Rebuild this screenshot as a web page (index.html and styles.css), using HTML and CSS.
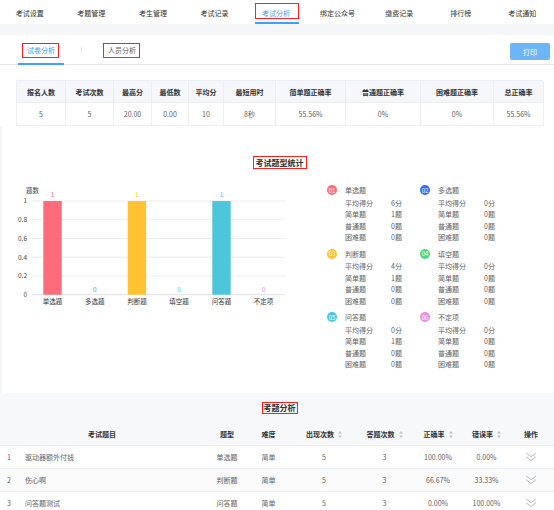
FILE: index.html
```html
<!DOCTYPE html>
<html lang="zh-CN">
<head>
<meta charset="utf-8">
<title>考试分析</title>
<link rel="stylesheet" href="styles.css">
</head>
<body>
<nav class="topnav">
  <div class="nav-item"><div class="nav-link"><span class="nav-label">考试设置</span></div></div>
  <div class="nav-item"><div class="nav-link"><span class="nav-label">考题管理</span></div></div>
  <div class="nav-item"><div class="nav-link"><span class="nav-label">考生管理</span></div></div>
  <div class="nav-item"><div class="nav-link"><span class="nav-label">考试记录</span></div></div>
  <div class="nav-item active"><div class="nav-link"><span class="nav-label">考试分析</span></div></div>
  <div class="nav-item"><div class="nav-link"><span class="nav-label">绑定公众号</span></div></div>
  <div class="nav-item"><div class="nav-link"><span class="nav-label">缴费记录</span></div></div>
  <div class="nav-item"><div class="nav-link"><span class="nav-label">排行榜</span></div></div>
  <div class="nav-item"><div class="nav-link"><span class="nav-label">考试通知</span></div></div>
</nav>
<div class="band"></div>

<div class="subtabs">
  <div class="subtab active"><span class="subtab-label">试卷分析</span></div>
  <div class="subtab-sep"></div>
  <div class="subtab"><span class="subtab-label">人员分析</span></div>
  <button class="print-btn">打印</button>
</div>

<div class="summary">
  <div class="summary-grid">
    <div class="sh">报名人数</div><div class="sh">考试次数</div><div class="sh">最高分</div><div class="sh">最低数</div><div class="sh">平均分</div><div class="sh">最短用时</div><div class="sh">简单题正确率</div><div class="sh">普通题正确率</div><div class="sh">困难题正确率</div><div class="sh">总正确率</div>
    <div class="sd">5</div><div class="sd">5</div><div class="sd">20.00</div><div class="sd">0.00</div><div class="sd">10</div><div class="sd">8秒</div><div class="sd">55.56%</div><div class="sd">0%</div><div class="sd">0%</div><div class="sd">55.56%</div>
  </div>
</div>

<section class="types">
  <div class="section-title"><span class="boxed-title">考试题型统计</span></div>
  <div class="types-body">
    <svg class="chart" width="300" height="135" viewBox="0 0 300 135">
      <text x="26" y="11.5" class="ax">题数</text>
      <g class="grid">
        <line x1="32" y1="20" x2="285" y2="20"/>
        <line x1="32" y1="38.7" x2="285" y2="38.7"/>
        <line x1="32" y1="57.5" x2="285" y2="57.5"/>
        <line x1="32" y1="76.2" x2="285" y2="76.2"/>
        <line x1="32" y1="95" x2="285" y2="95"/>
      </g>
      <line x1="32" y1="113.7" x2="285" y2="113.7" class="axis"/>
      <g class="ylab">
        <text x="27" y="22.3">1</text>
        <text x="27" y="41">0.8</text>
        <text x="27" y="59.8">0.6</text>
        <text x="27" y="78.5">0.4</text>
        <text x="27" y="97.3">0.2</text>
        <text x="27" y="116">0</text>
      </g>
      <rect x="43.3" y="20" width="18.4" height="93.7" fill="#ff6b78"/>
      <rect x="127.7" y="20" width="18.4" height="93.7" fill="#ffc233"/>
      <rect x="212.3" y="20" width="18.4" height="93.7" fill="#4dc6dc"/>
      <g class="vlab">
        <text x="52.5" y="15.5" fill="#ff6b78">1</text>
        <text x="94.7" y="110.5" fill="#5b8ff9">0</text>
        <text x="136.9" y="15.5" fill="#ffc233">1</text>
        <text x="179.1" y="110.5" fill="#5ad88f">0</text>
        <text x="221.5" y="15.5" fill="#4dc6dc">1</text>
        <text x="263.5" y="110.5" fill="#e58fe8">0</text>
      </g>
      <g class="xlab">
        <text x="52.5" y="123">单选题</text>
        <text x="94.7" y="123">多选题</text>
        <text x="136.9" y="123">判断题</text>
        <text x="179.1" y="123">填空题</text>
        <text x="221.5" y="123">问答题</text>
        <text x="263.5" y="123">不定项</text>
      </g>
    </svg>

    <div class="stats">
      <div class="stat-group">
        <div class="stat-head"><span class="badge c1">01</span><span>单选题</span></div>
        <div class="stat-row"><span>平均得分</span><span>6分</span></div>
        <div class="stat-row"><span>简单题</span><span>1题</span></div>
        <div class="stat-row"><span>普通题</span><span>0题</span></div>
        <div class="stat-row"><span>困难题</span><span>0题</span></div>
      </div>
      <div class="stat-group">
        <div class="stat-head"><span class="badge c2">02</span><span>多选题</span></div>
        <div class="stat-row"><span>平均得分</span><span>0分</span></div>
        <div class="stat-row"><span>简单题</span><span>0题</span></div>
        <div class="stat-row"><span>普通题</span><span>0题</span></div>
        <div class="stat-row"><span>困难题</span><span>0题</span></div>
      </div>
      <div class="stat-group">
        <div class="stat-head"><span class="badge c3">03</span><span>判断题</span></div>
        <div class="stat-row"><span>平均得分</span><span>4分</span></div>
        <div class="stat-row"><span>简单题</span><span>1题</span></div>
        <div class="stat-row"><span>普通题</span><span>0题</span></div>
        <div class="stat-row"><span>困难题</span><span>0题</span></div>
      </div>
      <div class="stat-group">
        <div class="stat-head"><span class="badge c4">04</span><span>填空题</span></div>
        <div class="stat-row"><span>平均得分</span><span>0分</span></div>
        <div class="stat-row"><span>简单题</span><span>0题</span></div>
        <div class="stat-row"><span>普通题</span><span>0题</span></div>
        <div class="stat-row"><span>困难题</span><span>0题</span></div>
      </div>
      <div class="stat-group">
        <div class="stat-head"><span class="badge c5">05</span><span>问答题</span></div>
        <div class="stat-row"><span>平均得分</span><span>0分</span></div>
        <div class="stat-row"><span>简单题</span><span>1题</span></div>
        <div class="stat-row"><span>普通题</span><span>0题</span></div>
        <div class="stat-row"><span>困难题</span><span>0题</span></div>
      </div>
      <div class="stat-group">
        <div class="stat-head"><span class="badge c6">06</span><span>不定项</span></div>
        <div class="stat-row"><span>平均得分</span><span>0分</span></div>
        <div class="stat-row"><span>简单题</span><span>0题</span></div>
        <div class="stat-row"><span>普通题</span><span>0题</span></div>
        <div class="stat-row"><span>困难题</span><span>0题</span></div>
      </div>
    </div>
  </div>
</section>

<section class="qa">
  <div class="qa-title"><span class="boxed-title small">考题分析</span></div>
  <div class="qa-table">
    <div class="qh"></div>
    <div class="qh title-h">考试题目</div>
    <div class="qh">题型</div>
    <div class="qh">难度</div>
    <div class="qh">出现次数<svg class="sort" width="4" height="7" viewBox="0 0 4 7"><path d="M2 0 L4 2.6 L0 2.6 Z M0 4.4 L4 4.4 L2 7 Z"/></svg></div>
    <div class="qh">答题次数<svg class="sort" width="4" height="7" viewBox="0 0 4 7"><path d="M2 0 L4 2.6 L0 2.6 Z M0 4.4 L4 4.4 L2 7 Z"/></svg></div>
    <div class="qh">正确率<svg class="sort" width="4" height="7" viewBox="0 0 4 7"><path d="M2 0 L4 2.6 L0 2.6 Z M0 4.4 L4 4.4 L2 7 Z"/></svg></div>
    <div class="qh">错误率<svg class="sort" width="4" height="7" viewBox="0 0 4 7"><path d="M2 0 L4 2.6 L0 2.6 Z M0 4.4 L4 4.4 L2 7 Z"/></svg></div>
    <div class="qh">操作</div>

    <div class="qd idx">1</div><div class="qd ttl">驱动器额外付钱</div><div class="qd">单选题</div><div class="qd">简单</div><div class="qd">5</div><div class="qd">3</div><div class="qd">100.00%</div><div class="qd">0.00%</div>
    <div class="qd"><svg class="chev" width="12" height="10" viewBox="0 0 12 10"><path d="M1 1 L6 4.6 L11 1 M1 4.8 L6 8.4 L11 4.8"/></svg></div>

    <div class="qd idx alt">2</div><div class="qd ttl alt">伤心啊</div><div class="qd alt">判断题</div><div class="qd alt">简单</div><div class="qd alt">5</div><div class="qd alt">3</div><div class="qd alt">66.67%</div><div class="qd alt">33.33%</div>
    <div class="qd alt"><svg class="chev" width="12" height="10" viewBox="0 0 12 10"><path d="M1 1 L6 4.6 L11 1 M1 4.8 L6 8.4 L11 4.8"/></svg></div>

    <div class="qd idx">3</div><div class="qd ttl">问答题测试</div><div class="qd">问答题</div><div class="qd">简单</div><div class="qd">5</div><div class="qd">3</div><div class="qd">0.00%</div><div class="qd">100.00%</div>
    <div class="qd"><svg class="chev" width="12" height="10" viewBox="0 0 12 10"><path d="M1 1 L6 4.6 L11 1 M1 4.8 L6 8.4 L11 4.8"/></svg></div>
  </div>
</section>
</body>
</html>
```
FILE: styles.css
```css
* { box-sizing: border-box; }
body {
  margin: 0;
  width: 554px;
  font-family: "Noto Sans CJK SC", "Noto Sans", sans-serif;
  font-size: 7px;
  color: #606266;
  background: #fff;
  overflow: hidden;
}

/* top navigation */
.topnav { display: flex; height: 24px; background: #fff; }
.nav-item { flex: 1; display: flex; justify-content: center; align-items: flex-start; padding-top: 3px; }
.nav-link { display: flex; padding-bottom: 3px; border-bottom: 2px solid transparent; }
.nav-label {
  display: block;
  border: 1px solid transparent;
  padding: 4px 8px 0 6px;
  line-height: 10px;
  color: #303133;
  white-space: nowrap;
}
.nav-item.active .nav-link { border-bottom-color: #409eff; }
.nav-item.active .nav-label { border-color: #ff1f1f; color: #409eff; }

.band { height: 11px; background: #f5f6f8; }

/* sub tabs */
.subtabs {
  display: flex;
  height: 30px;
  padding-left: 18px;
  border-bottom: 1px solid #e4e7ed;
}
.subtab {
  display: flex;
  align-items: center;
  padding: 2px 5px 0 4px;
  border-bottom: 2px solid transparent;
  margin-bottom: -1px;
}
.subtab.active { border-bottom-color: #409eff; }
.subtab-label {
  border: 1px solid #ff1f1f;
  padding: 0 3px 0 4px;
  line-height: 13px;
  color: #606266;
}
.subtab.active .subtab-label { color: #409eff; }
.subtab-sep { width: 1px; height: 7px; background: #e4e7ed; align-self: center; margin: 2px 17px 0; }
.print-btn {
  margin: 8px 4px 0 auto;
  align-self: flex-start;
  width: 40px;
  height: 17px;
  border: none;
  border-radius: 2px;
  background: #6cb5f7;
  color: #fff;
  font-family: inherit;
  font-size: 7px;
  padding: 0;
}

/* summary */
.summary { padding: 15px 11px 0 16px; }
.summary-grid {
  display: grid;
  grid-template-columns: 49px 48px 38px 37px 35px 52px 70px 75px 73px 50px;
  border-top: 1px solid #ebeef5;
  border-left: 1px solid #ebeef5;
}
.summary-grid > div {
  display: flex;
  align-items: center;
  justify-content: center;
  border-right: 1px solid #ebeef5;
  border-bottom: 1px solid #ebeef5;
  white-space: nowrap;
}
.sh { height: 22px; background: #f5f7fa; font-weight: bold; color: #303133; }
.sd { height: 23px; color: #606266; }

/* type statistics */
.types { padding: 30px 0 22px; box-shadow: inset 2px 0 #f5f6fa; }
.section-title { display: flex; justify-content: center; padding-left: 5px; }
.boxed-title {
  border: 1px solid #ff1f1f;
  padding: 0 2px;
  font-size: 8px;
  line-height: 11px;
  font-weight: bold;
  color: #303133;
}
.boxed-title.small { padding: 0 1px; line-height: 10px; }
.types-body { display: flex; margin-top: 12px; }
.chart { display: block; flex: none; }
.chart text { font-family: "Noto Sans CJK SC", "Noto Sans", sans-serif; font-size: 6.5px; }
.chart .ax { fill: #444; }
.chart .grid line { stroke: #e6e8ee; stroke-width: 0.8; }
.chart .axis { stroke: #d5d8de; stroke-width: 0.8; }
.chart .ylab text { fill: #444; text-anchor: end; }
.chart .vlab text { text-anchor: middle; }
.chart .xlab text { fill: #333; text-anchor: middle; }

.stats {
  display: grid;
  grid-template-columns: 93px 93px;
  row-gap: 4px;
  margin: 3px 0 0 27px;
  align-self: flex-start;
}
.stat-head { display: flex; align-items: center; height: 12px; margin-bottom: 1.5px; color: #606266; }
.badge {
  width: 10px;
  height: 10px;
  border-radius: 50%;
  color: #fff;
  font-size: 6px;
  display: flex;
  align-items: center;
  justify-content: center;
  margin-right: 8px;
}
.c1 { background: #ff6b78; }
.c2 { background: #2f6ef2; }
.c3 { background: #ffc233; }
.c4 { background: #4cd97b; }
.c5 { background: #4dc6dc; }
.c6 { background: #e98de6; }
.stat-row {
  display: grid;
  grid-template-columns: 46px auto;
  padding-left: 18px;
  height: 11.5px;
  line-height: 11.5px;
  white-space: nowrap;
}

/* question analysis */
.qa { background: #f7f8fa; padding-top: 9px; }
.qa-title { display: flex; justify-content: center; padding-left: 5px; }
.qa-table {
  display: grid;
  grid-template-columns: 17px 190px 40px 43px 68px 53px 54px 43px 46px;
  margin-top: 10px;
}
.qh {
  height: 22px;
  display: flex;
  align-items: center;
  justify-content: center;
  font-weight: bold;
  color: #303133;
  white-space: nowrap;
  border-bottom: 1px solid #ebeef5;
}
.qh.title-h { padding-right: 20px; }
.sort { margin-left: 4px; fill: #c0c4cc; }
.qd {
  height: 23px;
  display: flex;
  align-items: center;
  justify-content: center;
  background: #fff;
  border-bottom: 1px solid #ebeef5;
  white-space: nowrap;
  color: #606266;
}
.qd.alt { background: #fafafa; }
.qd.idx { justify-content: flex-start; padding-left: 7px; }
.qd.ttl { justify-content: flex-start; padding-left: 8px; }
.chev { fill: none; stroke: #a8abb2; stroke-width: 0.8; }
```
